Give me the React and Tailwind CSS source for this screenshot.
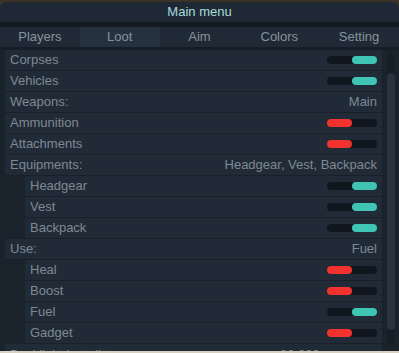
import React from 'react';

const tabs = ["Players", "Loot", "Aim", "Colors", "Setting"]

const rows = [
    {label: "Corpses", toggle: true},
    {label: "Vehicles", toggle: true},
    {label: "Weapons:", value: "Main"},
    {label: "Ammunition", toggle: false},
    {label: "Attachments", toggle: false},
    {label: "Equipments:", value: "Headgear, Vest, Backpack"},
    {label: "Headgear", toggle: true, sub: true},
    {label: "Vest", toggle: true, sub: true},
    {label: "Backpack", toggle: true, sub: true},
    {label: "Use:", value: "Fuel"},
    {label: "Heal", toggle: false, sub: true},
    {label: "Boost", toggle: false, sub: true},
    {label: "Fuel", toggle: true, sub: true},
    {label: "Gadget", toggle: false, sub: true},
]

const Toggle = ({on}) => (
    <div className="flex w-[50px] h-[8px] rounded-full bg-[#10161e]">
        <div className={on
            ? "ml-auto w-[25px] h-full rounded-full bg-[#40c5b4]"
            : "w-[25px] h-full rounded-full bg-[#f2322f]"}/>
    </div>
)

const Row = ({row}) => (
    <div className={row.sub ? "flex h-[21px] pl-[20px] bg-[#1a222c]" : "flex h-[21px]"}>
        <div className="flex flex-1 items-center justify-between pl-[5px] pr-[5px] bg-[#212b37] border-b border-[#18202a]">
            <span>{row.label}</span>
            {row.value !== undefined ? <span>{row.value}</span> : <Toggle on={row.toggle}/>}
        </div>
    </div>
)

const App = () => {
    return (
        <div className="w-[399px] h-[353px] overflow-hidden bg-[#3b3327] text-[13px] text-[#7f8993]"
             style={{fontFamily: '"Liberation Sans", Arial, sans-serif'}}>
            <div className="h-[2px]"/>
            <div className="h-[20px] rounded-t-md bg-[#1f2935] flex items-center justify-center text-[#a6dcd9]">
                Main menu
            </div>
            <div className="h-[5px] bg-[#131a22]"/>
            <div className="grid grid-cols-5 h-[20px] bg-[#202a36] text-[#87929d]">
                {tabs.map(t => (
                    <div key={t}
                         className={t === "Loot"
                             ? "flex items-center justify-center bg-[#263140]"
                             : "flex items-center justify-center"}>
                        {t}
                    </div>
                ))}
            </div>
            <div className="h-[3px] bg-[#161d26]"/>
            <div className="flex h-[301px] bg-[#1a222c] overflow-hidden">
                <div className="flex-1 pl-[5px] pr-[5px]">
                    {rows.map(r => <Row key={r.label} row={r}/>)}
                    <div className="flex h-[21px]">
                        <div className="flex flex-1 items-center pl-[5px] pr-[5px] bg-[#212b37]">
                            <span className="w-[218px]">Backlight loot distance</span>
                            <div className="w-[20px] h-[6px] rounded-sm bg-[#2f8c82]"/>
                            <span className="ml-[32px]">80.000</span>
                        </div>
                    </div>
                </div>
                <div className="w-[12px] pr-[4px] pt-[3px] pb-[5px] bg-[#1a222c]">
                    <div className="h-full rounded-md bg-[#171e27] pt-[20px] pb-[16px]">
                        <div className="h-full rounded-md bg-[#29333f]"/>
                    </div>
                </div>
            </div>
            <div className="h-[2px] bg-[#d9d1c3]"/>
        </div>
    )
}

export default App;
